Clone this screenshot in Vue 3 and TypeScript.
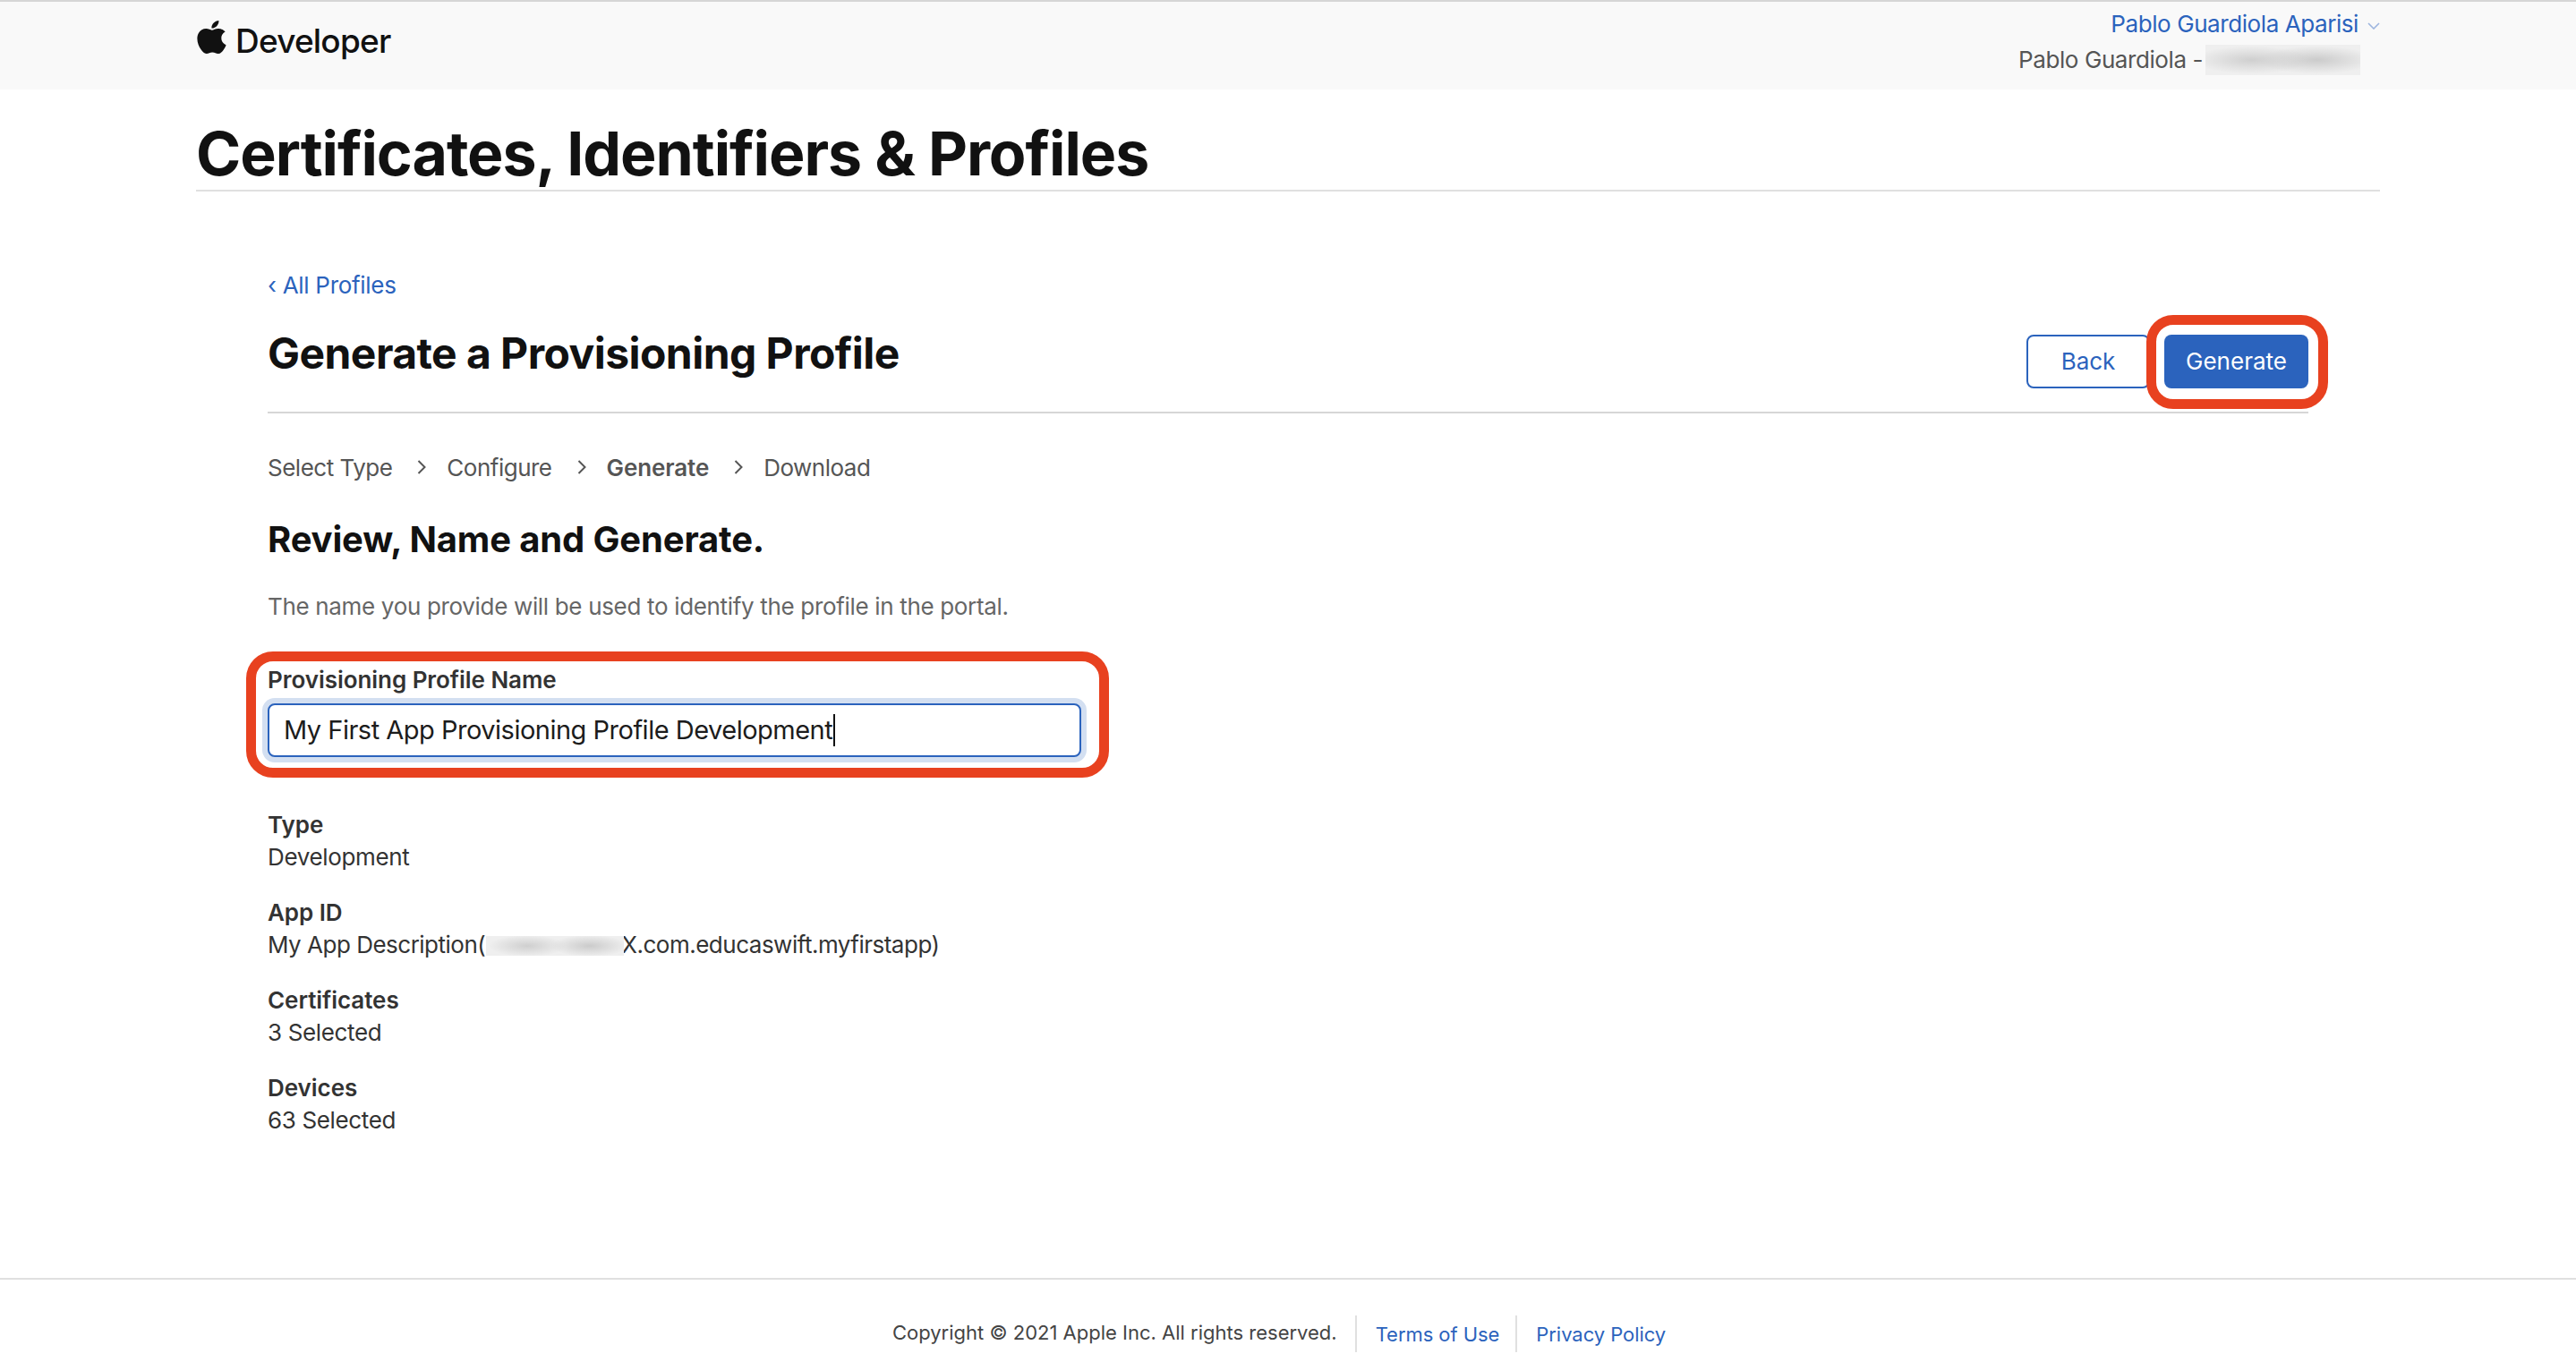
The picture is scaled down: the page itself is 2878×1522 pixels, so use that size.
<script setup lang="ts">
const steps = [
  { label: 'Select Type', active: false },
  { label: 'Configure', active: false },
  { label: 'Generate', active: true },
  { label: 'Download', active: false },
]
const details = [
  { term: 'Type', value: 'Development' },
  { term: 'Certificates', value: '3 Selected' },
  { term: 'Devices', value: '63 Selected' },
]
</script>

<template>
  <div class="page">
    <header class="top">
      <div class="brand">
        <svg class="apple" viewBox="2 0 20 24" preserveAspectRatio="none" aria-hidden="true"><path d="M12.152 6.896c-.948 0-2.415-1.078-3.96-1.04-2.04.027-3.91 1.183-4.961 3.014-2.117 3.675-.546 9.103 1.519 12.09 1.013 1.454 2.208 3.09 3.792 3.039 1.52-.065 2.09-.987 3.935-.987 1.831 0 2.35.987 3.96.948 1.637-.026 2.676-1.48 3.676-2.948 1.156-1.688 1.636-3.325 1.662-3.415-.039-.013-3.182-1.221-3.22-4.857-.026-3.04 2.48-4.494 2.597-4.559-1.429-2.09-3.623-2.324-4.39-2.376-2-.156-3.675 1.09-4.61 1.09zM15.53 3.83c.843-1.012 1.4-2.427 1.245-3.83-1.207.052-2.662.805-3.532 1.818-.78.896-1.454 2.338-1.273 3.714 1.338.104 2.715-.688 3.559-1.701"/></svg>
        <span class="brand-name">Developer</span>
      </div>
      <div class="account">
        <div class="account-name">
          <a>Pablo Guardiola Aparisi</a>
          <svg class="caret-down" viewBox="0 0 14 8" aria-hidden="true"><path d="M1 1l6 6 6-6" fill="none" stroke="#9db5df" stroke-width="1.6"/></svg>
        </div>
        <div class="account-team">Pablo Guardiola -<span class="blur blur-team"></span></div>
      </div>
    </header>

    <div class="title-bar"><h1>Certificates, Identifiers &amp; Profiles</h1></div>

    <main class="main">
      <a class="back-link">‹ All Profiles</a>
      <div class="head-row">
        <h2>Generate a Provisioning Profile</h2>
        <div class="actions">
          <button class="btn btn-outline">Back</button>
          <div class="mark-wrap">
            <button class="btn btn-primary">Generate</button>
            <span class="ring ring-btn"></span>
          </div>
        </div>
      </div>

      <nav class="steps">
        <template v-for="(s, i) in steps" :key="s.label">
          <span :class="['step', { active: s.active }]">{{ s.label }}</span>
          <svg v-if="i < steps.length - 1" class="chev" viewBox="0 0 10 16" aria-hidden="true"><path d="M1.5 1l7 7-7 7" fill="none" stroke="#555" stroke-width="2"/></svg>
        </template>
      </nav>

      <h3>Review, Name and Generate.</h3>
      <p class="desc">The name you provide will be used to identify the profile in the portal.</p>

      <div class="field">
        <label class="field-label">Provisioning Profile Name</label>
        <div class="input">My First App Provisioning Profile Development<span class="text-caret"></span></div>
        <span class="ring ring-field"></span>
      </div>

      <dl class="details">
        <div class="item">
          <dt>{{ details[0].term }}</dt>
          <dd>{{ details[0].value }}</dd>
        </div>
        <div class="item">
          <dt>App ID</dt>
          <dd class="app-id">My App Description(<span class="blur blur-id"></span>X.com.educaswift.myfirstapp)</dd>
        </div>
        <div class="item">
          <dt>{{ details[1].term }}</dt>
          <dd>{{ details[1].value }}</dd>
        </div>
        <div class="item">
          <dt>{{ details[2].term }}</dt>
          <dd>{{ details[2].value }}</dd>
        </div>
      </dl>
    </main>

    <footer class="footer">
      <span class="copy">Copyright © 2021 Apple Inc. All rights reserved.</span>
      <a class="foot-link terms">Terms of Use</a>
      <a class="foot-link">Privacy Policy</a>
    </footer>
  </div>
</template>

<style>
html, body { margin: 0; background: #fff; }
</style>

<style scoped>
.page {
  width: 2878px;
  height: 1522px;
  display: flex;
  flex-direction: column;
  overflow: hidden;
  font-family: Inter, "Liberation Sans", sans-serif;
  color: #333;
  background: #fff;
}
a { color: #2b63bd; text-decoration: none; }

.top {
  height: 98px;
  background: #f9f9f9;
  border-top: 2px solid #d6d6d6;
  display: flex;
  justify-content: space-between;
  padding: 0 219px 0 220px;
  flex: none;
}
.brand { display: flex; align-items: flex-start; padding-top: 21px; }
.apple { width: 33px; height: 37px; fill: #111; display: block; }
.brand-name {
  margin-left: 10px;
  font-size: 37px;
  font-weight: 500;
  line-height: 46px;
  letter-spacing: -0.8px;
  color: #111;
}
.account { font-size: 26px; text-align: right; line-height: 40px; padding-top: 5px; }
.account-name { display: flex; justify-content: flex-end; align-items: center; height: 40px; }
.account-name a { letter-spacing: -0.42px; }
.caret-down { width: 14px; height: 8px; margin-left: 10px; margin-top: 4px; }
.account-team { display: flex; justify-content: flex-end; align-items: center; height: 40px; color: #555; padding-right: 22px; letter-spacing: -0.42px; }
.blur { display: inline-block; background-color: #efefef; }
.blur-team {
  width: 173px;
  height: 34px;
  margin-left: 3px;
  background-image: radial-gradient(ellipse 38% 46% at 30% 50%, #cfcfcf, transparent), radial-gradient(ellipse 38% 46% at 72% 50%, #cbcbcb, transparent);
}
.blur-id {
  width: 154px;
  height: 22px;
  margin-left: 1px;
  margin-right: -3px;
  position: relative;
  vertical-align: -3px;
  background-image: radial-gradient(ellipse 28% 55% at 30% 50%, #cfcfcf, transparent), radial-gradient(ellipse 28% 55% at 75% 50%, #cbcbcb, transparent);
}

.title-bar {
  height: 112px;
  margin: 0 219px;
  border-bottom: 2px solid #e0e0e0;
  flex: none;
}
h1 {
  margin: 0;
  padding-top: 31px;
  font-size: 68px;
  line-height: 80px;
  font-weight: 700;
  color: #111;
  letter-spacing: -1.05px;
}

.main {
  flex: 1;
  padding: 85px 299px 0;
  display: flex;
  flex-direction: column;
  align-items: stretch;
}
.back-link { display: block; font-size: 26px; line-height: 40px; letter-spacing: -0.3px; }

.head-row {
  height: 121px;
  border-bottom: 2px solid #d6d6d6;
  display: flex;
  justify-content: space-between;
  align-items: flex-start;
  flex: none;
}
h2 {
  margin: 28px 0 0;
  font-size: 48px;
  line-height: 56px;
  font-weight: 700;
  color: #111;
  letter-spacing: -0.55px;
}
.actions { display: flex; gap: 16px; margin-top: 35px; }
.btn {
  height: 60px;
  border-radius: 8px;
  font-family: inherit;
  font-size: 26px;
  font-weight: 400;
  cursor: pointer;
  padding: 0 0 2px;
  display: block;
}
.btn-outline { width: 138px; background: #fff; color: #2b63bd; border: 2px solid #2b63bd; }
.btn-primary { width: 161px; background: #2b63bd; color: #fff; border: 0; }
.mark-wrap { position: relative; }
.ring { position: absolute; border: 11px solid #e8411f; pointer-events: none; box-sizing: border-box; }
.ring-btn { left: -20px; right: -22px; top: -22px; bottom: -23px; border-radius: 30px; background: transparent; }

.steps { display: flex; align-items: center; height: 40px; margin-top: 40px; font-size: 26px; color: #555; letter-spacing: -0.5px; flex: none; }
.step.active { font-weight: 600; letter-spacing: -0.1px; }
.chev { width: 10px; height: 16px; margin: 0 23px 0 28px; }

h3 {
  margin: 37px 0 0;
  font-size: 40px;
  line-height: 48px;
  font-weight: 700;
  color: #111;
  letter-spacing: -0.15px;
}
.desc { margin: 31px 0 0; font-size: 26px; line-height: 40px; color: #666; letter-spacing: -0.33px; }

.field { position: relative; width: 909px; margin-top: 42px; flex: none; }
.field-label { display: block; font-size: 26px; line-height: 40px; font-weight: 600; color: #333; letter-spacing: -0.05px; margin-bottom: 6px; }
.input {
  box-sizing: border-box;
  height: 60px;
  border: 2px solid #2b63bd;
  border-radius: 8px;
  box-shadow: 0 0 0 6px #d3dff1;
  padding-left: 16px;
  font-size: 29px;
  line-height: 56px;
  color: #1c1c1c;
  display: flex;
  align-items: center;
  letter-spacing: -0.5px;
  background: #fff;
}
.text-caret { width: 2px; height: 36px; background: #111; margin-left: 1px; }
.ring-field { left: -24px; right: -31px; top: -12px; bottom: -23px; border-radius: 30px; }

.details { margin: 58px 0 0; display: flex; flex-direction: column; gap: 26px; }
.item { font-size: 26px; line-height: 36px; letter-spacing: -0.35px; }
.app-id { letter-spacing: -0.5px; }
dt { font-weight: 600; color: #333; letter-spacing: -0.05px; }
dd { margin: 0; color: #333; }

.footer {
  height: 52px;
  border-top: 2px solid #e0e0e0;
  display: flex;
  justify-content: center;
  align-items: flex-start;
  padding: 40px 20px 0 0;
  font-size: 22px;
  flex: none;
}
.copy { color: #444; line-height: 40px; padding-right: 20px; margin-top: -1px; }
.foot-link { line-height: 40px; height: 40px; padding: 1px 0 0 21px; border-left: 2px solid #e0e0e0; letter-spacing: -0.06px; }
.foot-link.terms { padding-right: 18px; }
</style>
